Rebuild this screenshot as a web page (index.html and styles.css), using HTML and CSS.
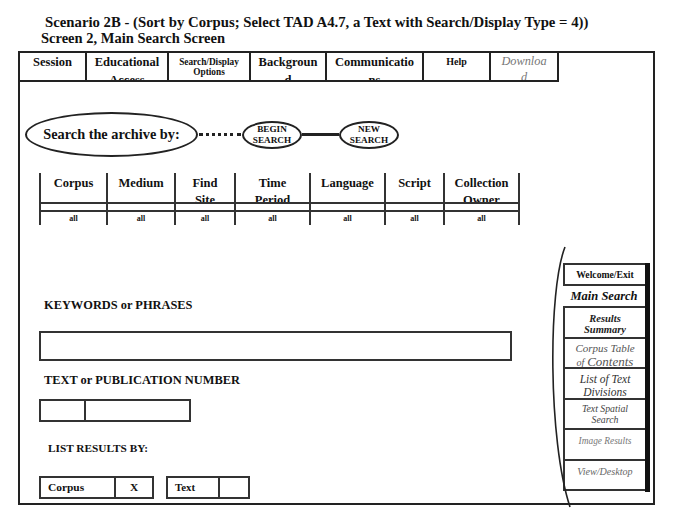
FILE: index.html
```html
<!DOCTYPE html>
<html>
<head>
<meta charset="utf-8">
<title>Main Search Screen</title>
<link rel="stylesheet" href="styles.css">
</head>
<body>
<div class="title">
  <div class="t1">Scenario 2B - (Sort by Corpus; Select TAD A4.7, a Text with Search/Display Type = 4))</div>
  <div class="t2">Screen 2, Main Search Screen</div>
</div>

<div class="frame">
  <ul class="tabs">
    <li class="tab w67">Session</li>
    <li class="tab w82">Educational Access</li>
    <li class="tab w82 small">Search/Display<br>Options</li>
    <li class="tab w76">Backgroun<br>d</li>
    <li class="tab w97">Communicatio<br>ns</li>
    <li class="tab w67 help">Help</li>
    <li class="tab w68 dl">Downloa<br>d</li>
  </ul>

  <div class="body">
    <div class="main">
      <div class="search-row">
        <div class="oval big">Search the archive by:</div>
        <span class="dots"></span>
        <div class="oval btn">BEGIN<br>SEARCH</div>
        <span class="link"></span>
        <div class="oval btn">NEW<br>SEARCH</div>
      </div>

      <div class="grid">
        <div class="row head">
          <div class="c c1">Corpus</div>
          <div class="c c2">Medium</div>
          <div class="c c3">Find<br>Site</div>
          <div class="c c4">Time<br>Period</div>
          <div class="c c5">Language</div>
          <div class="c c6">Script</div>
          <div class="c c7">Collection<br>Owner</div>
        </div>
        <div class="row gap">
          <div class="c c1"></div><div class="c c2"></div><div class="c c3"></div><div class="c c4"></div><div class="c c5"></div><div class="c c6"></div><div class="c c7"></div>
        </div>
        <div class="row vals">
          <div class="c c1">all</div>
          <div class="c c2">all</div>
          <div class="c c3">all</div>
          <div class="c c4">all</div>
          <div class="c c5">all</div>
          <div class="c c6">all</div>
          <div class="c c7">all</div>
        </div>
      </div>

      <div class="label kw">KEYWORDS or PHRASES</div>
      <div class="field wide"></div>

      <div class="label num">TEXT or PUBLICATION NUMBER</div>
      <div class="field pub"><span class="pre"></span><span></span></div>

      <div class="label list">LIST RESULTS BY:</div>
      <div class="sorts">
        <div class="sort"><span class="name corpus">Corpus</span><span class="mark corpus-x">X</span></div>
        <div class="sort"><span class="name text">Text</span><span class="mark text-x"></span></div>
      </div>
    </div>

    <div class="side">
      <div class="nav welcome">Welcome/Exit</div>
      <div class="nav current">Main Search</div>
      <div class="nav item results">Results<br>Summary</div>
      <div class="nav item toc">Corpus Table<br><span class="of">of</span> <span class="big">Contents</span></div>
      <div class="nav item divs">List of Text<br>Divisions</div>
      <div class="nav item spatial">Text Spatial<br>Search</div>
      <div class="nav item images">Image Results</div>
      <div class="nav item last desk">View/Desktop</div>
    </div>
  </div>

  <svg class="curve" width="633" height="460" viewBox="0 0 633 460">
    <path d="M545 194 C528 237, 528 387, 550 454" fill="none" stroke="#222" stroke-width="1.6"/>
  </svg>
</div>
</body>
</html>
```

FILE: styles.css
```css
*{margin:0;padding:0;list-style:none;box-sizing:border-box;}
body{background:#fff;color:#111;font-family:"Liberation Serif","Times New Roman",serif;width:675px;height:530px;overflow:hidden;}

.title{padding-top:14px;font-size:14.5px;font-weight:bold;line-height:16px;}
.t1{padding-left:45px;font-size:14.75px;}
.t2{padding-left:41px;}

.frame{position:relative;margin:5px 0 0 18px;width:637px;height:454px;border:2px solid #222;}

/* top tabs */
.tabs{display:flex;width:539px;border-bottom:2px solid #222;}
.tab{height:27px;overflow:hidden;border-right:2px solid #222;text-align:center;font-weight:bold;font-size:12.5px;line-height:18px;}
.w67{width:67px;}
.w68{width:68px;}
.w76{width:76px;}
.w82{width:82px;}
.w97{width:97px;}
.tab.small{font-size:9.3px;line-height:10px;padding-top:3.5px;}
.tab.help{font-size:10px;}
.tab.dl{font-weight:normal;font-style:italic;color:#777;font-size:12.3px;line-height:16px;}

.body{display:flex;}
.main{flex:1;}

/* search row */
.search-row{display:flex;align-items:center;margin:30px 0 0 5px;}
.oval{border:2px solid #222;border-radius:50%;display:flex;align-items:center;justify-content:center;text-align:center;font-weight:bold;}
.oval.big{width:173px;height:45px;font-size:14.3px;}
.oval.btn{width:60px;height:28px;font-size:9.2px;line-height:10.5px;}
.dots{width:42px;margin:0 1px;border-top:3px dotted #222;}
.link{width:37px;height:3px;background:#222;}

/* criteria table */
.grid{margin:16px 0 0 19px;width:481px;}
.row{display:flex;}
.c{border-left:2px solid #333;text-align:center;}
.c1{width:67px;}
.c2{width:68px;}
.c3{width:60px;}
.c4{width:75px;}
.c5{width:75px;}
.c6{width:59px;}
.c7{width:77px;border-right:2px solid #333;}
.head{border-bottom:2px solid #333;}
.head .c{height:29px;overflow:hidden;padding-top:2px;font-weight:bold;font-size:12.5px;line-height:17px;}
.gap{border-bottom:2px solid #333;}
.gap .c{height:6px;}
.vals .c{height:13px;font-size:8px;font-weight:bold;line-height:13px;}

/* lower form */
.label{font-weight:bold;font-size:12.4px;line-height:16px;margin-left:24px;}
.label.kw{margin-top:72px;}
.label.num{margin-top:11px;}
.label.list{margin:18px 0 0 28px;font-size:11.3px;}
.field{margin-left:19px;border:2px solid #333;}
.field.wide{margin-top:18px;width:473px;height:30px;}
.field.pub{margin-top:11px;width:152px;height:23px;display:flex;}
.field.pub .pre{width:45px;border-right:2px solid #333;}

.sorts{display:flex;gap:12px;margin:20px 0 0 19px;}
.sort{display:flex;height:23px;border:2px solid #333;font-weight:bold;font-size:11.4px;line-height:19px;}
.name{padding-left:7px;border-right:2px solid #333;}
.corpus{width:75px;}
.text{width:52px;font-size:10.8px;}
.mark{text-align:center;}
.corpus-x{width:36px;}
.text-x{width:28px;}

/* right hand navigation */
.side{width:87px;margin:181px 3px 0 0;border-right:5px solid #111;height:229px;}
.nav{text-align:center;border-left:2px solid #333;}
.welcome{height:23px;border-top:2px solid #333;border-bottom:2px solid #333;font-weight:bold;font-size:9.7px;line-height:19px;}
.current{height:20px;border-left:none;font-weight:bold;font-style:italic;font-size:12.5px;line-height:20px;}
.item{height:30.5px;overflow:hidden;border-top:2px solid #333;padding-top:4px;font-style:italic;}
.item.last{height:32.5px;border-bottom:2px solid #333;}
.results{font-weight:bold;font-size:10.5px;line-height:11px;color:#222;padding-top:4.5px;}
.toc{font-size:11px;line-height:13px;color:#555;padding-top:3.5px;}
.toc .of{font-size:10px;}
.toc .big{font-size:13px;}
.divs{font-size:11.5px;line-height:13px;color:#333;padding-top:3.5px;}
.spatial{font-size:9.8px;line-height:11px;color:#444;padding-top:3.5px;}
.images{font-size:9.4px;line-height:13px;color:#777;padding-top:4.5px;}
.desk{font-size:10.1px;line-height:13px;color:#666;padding-top:4.5px;}

.curve{position:absolute;left:0;top:0;overflow:visible;pointer-events:none;}
```
